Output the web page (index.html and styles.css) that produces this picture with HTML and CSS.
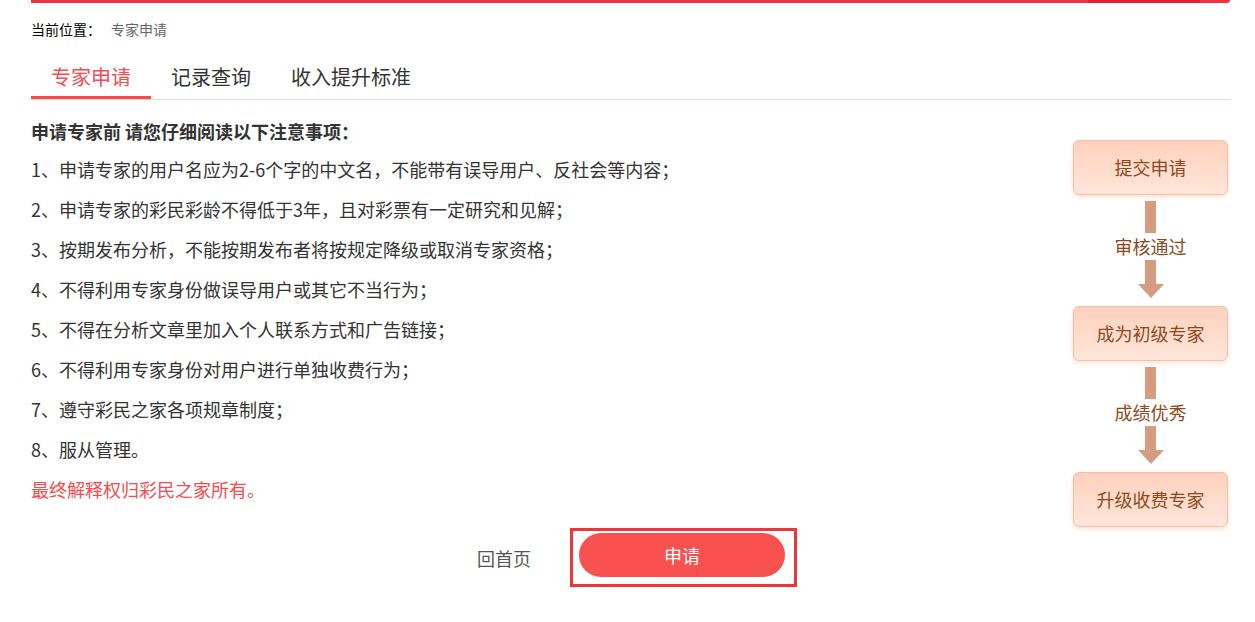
FILE: index.html
```html
<!DOCTYPE html>
<html lang="zh-CN">
<head>
    <meta charset="UTF-8">
    <meta name="viewport" content="width=device-width, initial-scale=1.0">
    <title>专家申请</title>
    <link rel="stylesheet" href="styles.css">
</head>
<body>
    <div class="topbar"></div>
    <div class="wrap">
        <div class="crumb">当前位置：<span>专家申请</span></div>

        <div class="tabs">
            <div class="tab active">专家申请</div>
            <div class="tab">记录查询</div>
            <div class="tab">收入提升标准</div>
        </div>

        <div class="main">
            <div class="notes">
                <h3>申请专家前 请您仔细阅读以下注意事项：</h3>
                <p>1、申请专家的用户名应为2-6个字的中文名，不能带有误导用户、反社会等内容；</p>
                <p>2、申请专家的彩民彩龄不得低于3年，且对彩票有一定研究和见解；</p>
                <p>3、按期发布分析，不能按期发布者将按规定降级或取消专家资格；</p>
                <p>4、不得利用专家身份做误导用户或其它不当行为；</p>
                <p>5、不得在分析文章里加入个人联系方式和广告链接；</p>
                <p>6、不得利用专家身份对用户进行单独收费行为；</p>
                <p>7、遵守彩民之家各项规章制度；</p>
                <p>8、服从管理。</p>
                <p class="tip">最终解释权归彩民之家所有。</p>
            </div>

            <div class="flow">
                <div class="step">提交申请</div>
                <div class="link">
                    <i class="bar"></i>
                    <span>审核通过</span>
                    <i class="bar short"></i>
                    <i class="head"></i>
                </div>
                <div class="step">成为初级专家</div>
                <div class="link">
                    <i class="bar"></i>
                    <span>成绩优秀</span>
                    <i class="bar short"></i>
                    <i class="head"></i>
                </div>
                <div class="step">升级收费专家</div>
            </div>
        </div>

        <div class="actions">
            <a class="home" href="#">回首页</a>
            <div class="btn-box">
                <button class="btn-apply">申请</button>
            </div>
        </div>
    </div>
</body>
</html>
```

FILE: styles.css
```css
body {
    margin: 0;
    font-family: "Microsoft YaHei", "Noto Sans CJK SC", sans-serif;
    color: #333;
    background: #fff;
}
.topbar {
    width: 1199px;
    height: 3px;
    margin-left: 31px;
    border-radius: 0 0 3px 0;
    background: linear-gradient(to right, #f2323f 0, #f2323f 1057px, #e41f2d 1057px, #e41f2d 1169px, #f2323f 1169px);
}
.wrap {
    width: 1200px;
    margin-left: 31px;
}
.crumb {
    margin-top: 16px;
    line-height: 20px;
    font-size: 14px;
    color: #000;
}
.crumb span {
    font-size: 14px;
    color: #666;
    margin-left: 10px;
}
.tabs {
    display: flex;
    margin-top: 18px;
    border-bottom: 1px solid #f3d4d4;
}
.tab {
    padding: 0 20px;
    font-size: 20px;
    line-height: 39px;
    color: #333;
    border-bottom: 3px solid transparent;
    cursor: pointer;
}
.tab.active {
    color: #f54d4f;
    border-bottom-color: #f54d4f;
}
.main {
    display: flex;
    justify-content: space-between;
}
.notes h3 {
    margin: 19px 0 6px;
    font-size: 18px;
    line-height: 24px;
    color: #333;
}
.notes p {
    margin: 0;
    font-size: 18px;
    line-height: 40px;
    color: #333;
}
.notes .tip {
    color: #f54d4f;
}
.flow {
    width: 155px;
    margin: 40px 3px 0 0;
    display: flex;
    flex-direction: column;
    align-items: center;
}
.step {
    box-sizing: border-box;
    width: 155px;
    height: 55px;
    line-height: 52px;
    text-align: center;
    font-size: 18px;
    color: #8a4a1e;
    border: 1px solid #f8bea3;
    border-radius: 6px;
    background: linear-gradient(#fed1bd, #ffe6da);
    box-shadow: 0 2px 4px rgba(240, 170, 140, 0.35);
}
.link {
    height: 111px;
    box-sizing: border-box;
    padding-top: 6px;
    display: flex;
    flex-direction: column;
    align-items: center;
}
.link span {
    font-size: 18px;
    line-height: 27px;
    color: #8a4a1e;
}
.bar {
    display: block;
    width: 11px;
    height: 32px;
    background: #d59c80;
}
.bar.short {
    height: 24px;
}
.head {
    display: block;
    width: 0;
    height: 0;
    border-left: 13px solid transparent;
    border-right: 13px solid transparent;
    border-top: 14px solid #d59c80;
}
.actions {
    display: flex;
    justify-content: center;
    align-items: center;
    gap: 39px;
    padding-left: 12px;
    margin-top: 1px;
}
.home {
    font-size: 18px;
    color: #555;
    text-decoration: none;
}
.btn-box {
    width: 227px;
    height: 59px;
    box-sizing: border-box;
    border: 3px solid #f0353a;
    padding: 2px 0 0 6px;
}
.btn-apply {
    display: block;
    width: 206px;
    height: 44px;
    border: none;
    border-radius: 22px;
    background: #f95050;
    color: #fff;
    font-family: inherit;
    font-size: 18px;
    cursor: pointer;
}
```
